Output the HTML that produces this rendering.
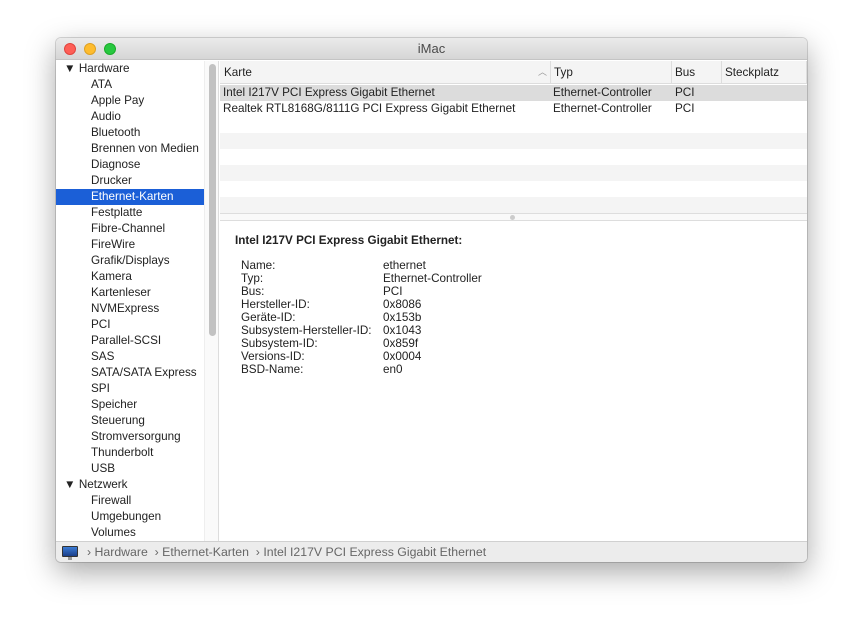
<!DOCTYPE html>
<html><head><style>
*{margin:0;padding:0;box-sizing:border-box}
body{width:863px;height:636px;background:#fff;font-family:"Liberation Sans",sans-serif;font-size:11.7px;color:#222;position:relative;overflow:hidden}
.win{position:absolute;left:56px;top:38px;width:751px;height:524px;border-radius:5px;background:#fff;box-shadow:0 10px 30px rgba(0,0,0,.35),0 0 0 1px rgba(0,0,0,.15);overflow:hidden}
.title{position:absolute;left:0;top:0;width:751px;height:22px;background:linear-gradient(#ebebeb,#d6d6d6);border-bottom:1px solid #c4c4c4;text-align:center;line-height:22px;font-size:13px;color:#4a4a4a}
.dot{position:absolute;top:5px;width:12px;height:12px;border-radius:50%}
.side{position:absolute;left:0;top:23px;width:148px;height:480px;background:#fff}
.si{position:absolute;left:35px;height:16px;line-height:16px;white-space:nowrap}
.sh{left:8px}
.sb{position:absolute;left:148px;top:23px;width:15px;height:480px;background:#fafafa;border-left:1px solid #eee;border-right:1px solid #ddd}
.thumb{position:absolute;left:4px;top:3px;width:7px;height:272px;background:#c2c2c2;border-radius:4px}
.main{position:absolute;left:164px;top:23px;width:587px;height:480px}
.hdr{position:absolute;left:0;top:0;width:587px;height:23px;background:#f4f4f4;border-bottom:1px solid #ddd;line-height:23px}
.hdr span{position:absolute;top:0}
.row{position:absolute;left:0;width:587px;height:16px;line-height:16px}
.row span{position:absolute}
.det{position:absolute;left:0;top:159px;width:587px;height:321px;border-top:1px solid #ddd}
.status{position:absolute;left:0;top:503px;width:751px;height:21px;background:#ececec;border-top:1px solid #d0d0d0;line-height:20px;color:#666;font-size:12.3px}
</style></head><body>
<div class="win">
<div class="title">iMac
<div class="dot" style="left:8px;background:#fe5f57;border:1px solid #e0443e"></div>
<div class="dot" style="left:28px;background:#febc2e;border:1px solid #dea123"></div>
<div class="dot" style="left:48px;background:#28c840;border:1px solid #1aab29"></div>
</div>
<div class="side">
<div class="si sh" style="top:0">▼ Hardware</div>
<div class="si" style="top:16px">ATA</div>
<div class="si" style="top:32px">Apple Pay</div>
<div class="si" style="top:48px">Audio</div>
<div class="si" style="top:64px">Bluetooth</div>
<div class="si" style="top:80px">Brennen von Medien</div>
<div class="si" style="top:96px">Diagnose</div>
<div class="si" style="top:112px">Drucker</div>
<div class="si" style="top:128px;left:0;width:148px;padding-left:35px;background:#1b5fd7;color:#fff">Ethernet-Karten</div>
<div class="si" style="top:144px">Festplatte</div>
<div class="si" style="top:160px">Fibre-Channel</div>
<div class="si" style="top:176px">FireWire</div>
<div class="si" style="top:192px">Grafik/Displays</div>
<div class="si" style="top:208px">Kamera</div>
<div class="si" style="top:224px">Kartenleser</div>
<div class="si" style="top:240px">NVMExpress</div>
<div class="si" style="top:256px">PCI</div>
<div class="si" style="top:272px">Parallel-SCSI</div>
<div class="si" style="top:288px">SAS</div>
<div class="si" style="top:304px">SATA/SATA Express</div>
<div class="si" style="top:320px">SPI</div>
<div class="si" style="top:336px">Speicher</div>
<div class="si" style="top:352px">Steuerung</div>
<div class="si" style="top:368px">Stromversorgung</div>
<div class="si" style="top:384px">Thunderbolt</div>
<div class="si" style="top:400px">USB</div>
<div class="si sh" style="top:416px">▼ Netzwerk</div>
<div class="si" style="top:432px">Firewall</div>
<div class="si" style="top:448px">Umgebungen</div>
<div class="si" style="top:464px">Volumes</div>
</div>
<div class="sb"><div class="thumb"></div></div>
<div class="main">
<div class="hdr"><span style="left:4px">Karte</span><span style="left:318px;color:#999;font-size:9px">︿</span><span style="left:330px;border-left:1px solid #ddd;padding-left:3px">Typ</span><span style="left:451px;border-left:1px solid #ddd;padding-left:3px">Bus</span><span style="left:501px;border-left:1px solid #ddd;padding-left:3px">Steckplatz</span><span style="left:586px;border-left:1px solid #ddd;height:23px"></span></div>
<div class="row" style="top:24px;background:#dcdcdc"><span style="left:3px">Intel I217V PCI Express Gigabit Ethernet</span><span style="left:333px">Ethernet-Controller</span><span style="left:455px">PCI</span></div>
<div class="row" style="top:40px"><span style="left:3px">Realtek RTL8168G/8111G PCI Express Gigabit Ethernet</span><span style="left:333px">Ethernet-Controller</span><span style="left:455px">PCI</span></div>
<div class="row" style="top:72px;background:#f4f4f4"></div>
<div class="row" style="top:104px;background:#f4f4f4"></div>
<div class="row" style="top:136px;background:#f4f4f4"></div>
<div style="position:absolute;left:0;top:152px;width:587px;height:7px;background:#f9f9f9;border-top:1px solid #ddd"><div style="position:absolute;left:290px;top:1px;width:5px;height:5px;border-radius:50%;background:#ccc"></div></div>
<div class="det">
<div style="position:absolute;left:15px;top:13px;font-weight:bold">Intel I217V PCI Express Gigabit Ethernet:</div>
<div style="position:absolute;left:21px;top:38px;line-height:13px">Name:<br>Typ:<br>Bus:<br>Hersteller-ID:<br>Geräte-ID:<br>Subsystem-Hersteller-ID:<br>Subsystem-ID:<br>Versions-ID:<br>BSD-Name:</div>
<div style="position:absolute;left:163px;top:38px;line-height:13px">ethernet<br>Ethernet-Controller<br>PCI<br>0x8086<br>0x153b<br>0x1043<br>0x859f<br>0x0004<br>en0</div>
</div>
</div>
<div class="status">
<div style="position:absolute;left:6px;top:4px;width:16px;height:11px;background:linear-gradient(#3a7bd5,#1b3f8a);border:1px solid #333;border-radius:1px"></div>
<div style="position:absolute;left:12px;top:15px;width:4px;height:3px;background:#999"></div>
<span style="position:absolute;left:31px">› Hardware &nbsp;› Ethernet-Karten &nbsp;› Intel I217V PCI Express Gigabit Ethernet</span>
</div>
</div>
</body></html>
